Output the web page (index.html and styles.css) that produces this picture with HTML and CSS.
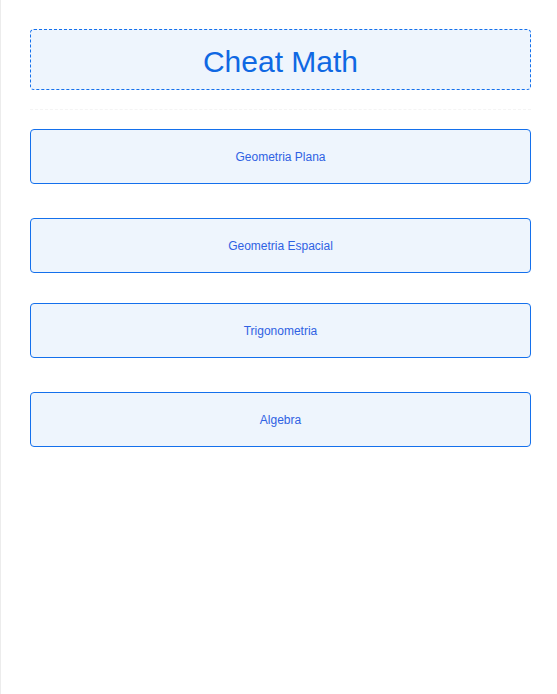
FILE: index.html
```html
<!DOCTYPE html>
<html lang="pt">
<head>
<meta charset="utf-8">
<title>Cheat Math</title>
<link rel="stylesheet" href="styles.css">
</head>
<body>
<div class="page">
  <header class="title-box">
    <h1 class="title">Cheat Math</h1>
  </header>
  <hr class="divider">
  <nav class="menu">
    <a class="menu-item item-1" href="#">Geometria Plana</a>
    <a class="menu-item item-2" href="#">Geometria Espacial</a>
    <a class="menu-item item-3" href="#">Trigonometria</a>
    <a class="menu-item item-4" href="#">Algebra</a>
  </nav>
</div>
</body>
</html>
```

FILE: styles.css
```css
html, body {
  margin: 0;
  padding: 0;
  background: #ffffff;
}

body {
  font-family: "Liberation Sans", Arial, sans-serif;
}

.page {
  box-sizing: border-box;
  min-height: 100vh;
  border-left: 1px solid #ececec;
  padding: 29px 26px 0 29px;
}

.title-box {
  box-sizing: border-box;
  height: 61px;
  border: 1px dashed #1470ec;
  border-radius: 4px;
  background: #eef5fd;
  display: flex;
  align-items: center;
  justify-content: center;
}

.title {
  margin: 0;
  font-size: 30px;
  font-weight: normal;
  color: #0f68e3;
  line-height: 1;
  position: relative;
  top: 2px;
}

.divider {
  margin: 19px 0 0 0;
  border: 0;
  border-top: 1px dashed #f4f4f4;
  height: 0;
}

.menu {
  display: flex;
  flex-direction: column;
}

.menu-item {
  box-sizing: border-box;
  height: 55px;
  border: 1px solid #1470ec;
  border-radius: 4px;
  background: #eef5fd;
  display: flex;
  align-items: center;
  justify-content: center;
  font-size: 12px;
  color: #2f62e3;
  text-decoration: none;
}

.item-1 { margin-top: 19px; }
.item-2 { margin-top: 34px; }
.item-3 { margin-top: 30px; }
.item-4 { margin-top: 34px; }
```
